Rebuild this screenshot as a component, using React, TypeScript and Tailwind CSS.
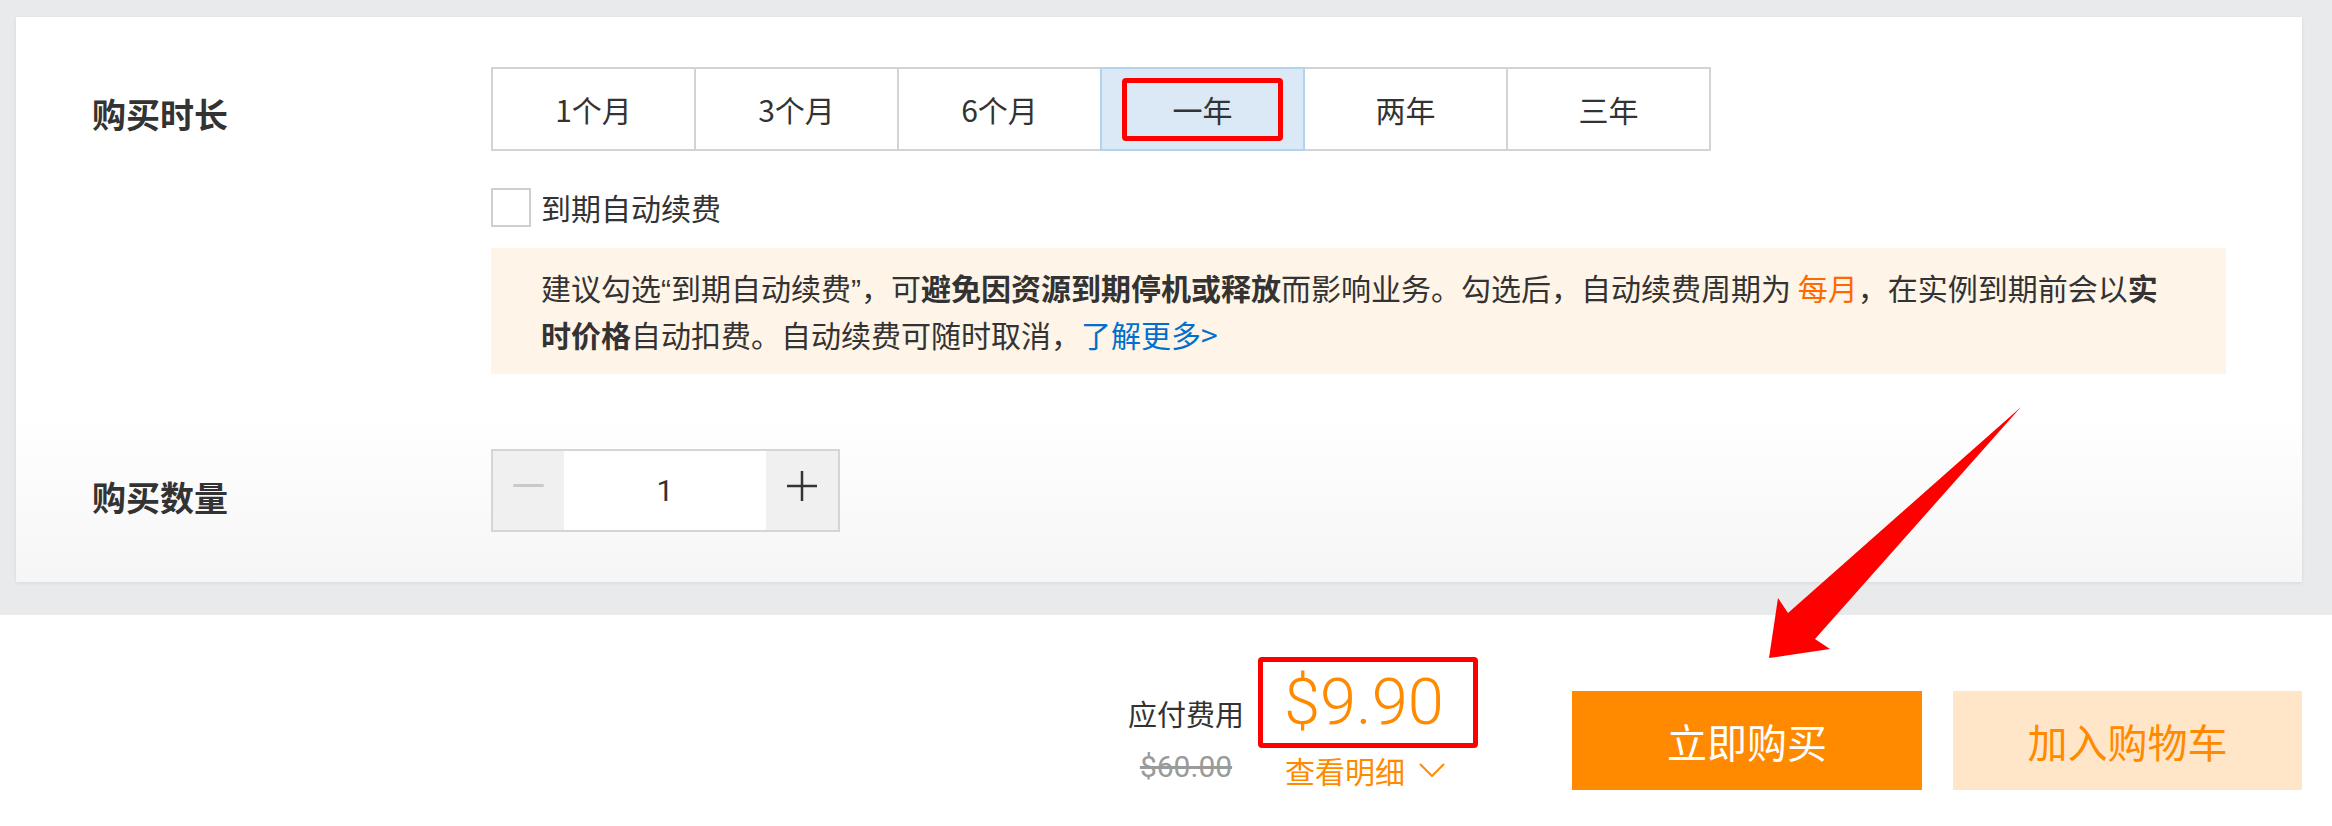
import React from "react"

const durations = ["1个月", "3个月", "6个月", "一年", "两年", "三年"]

function Tab({ label, active }: { label: string; active: boolean }) {
  if (active) {
    return (
      <div className="relative z-10 -ml-[2px] flex h-[84px] w-[205px] items-center justify-center border-2 border-[#b3d2ec] bg-[#dbe9f6]">
        {/* annotation box round the chosen duration */}
        <div className="flex h-[63px] w-[161px] items-center justify-center rounded-[4px] border-[5px] border-[#ff0000] text-[30px] text-[#333]">
          {label}
        </div>
      </div>
    )
  }
  return (
    <div className="-ml-[2px] flex h-[84px] w-[205px] items-center justify-center border-2 border-[#d3d3d3] bg-white text-[30px] text-[#333] first:ml-0">
      {label}
    </div>
  )
}

export default function App() {
  return (
    <div className="relative h-[826px] w-[2332px] overflow-hidden bg-white font-['Noto_Sans_CJK_SC',sans-serif]">
      <div className="bg-[#e9eaec] pb-[33px] pl-[16px] pr-[30px] pt-[17px]">
        <div className="flex h-[565px] flex-col bg-linear-to-b from-white from-70% to-[#f6f6f7] pl-[76px] pt-[50px] shadow-[0_1px_4px_rgba(0,0,0,0.08)]">
          {/* 购买时长 */}
          <div className="flex">
            <div className="flex h-[84px] w-[399px] items-center pt-[8px] text-[34px] font-bold text-[#333]">购买时长</div>
            <div className="flex flex-col">
              <div className="flex">
                {durations.map(d => (
                  <Tab key={d} label={d} active={d === "一年"} />
                ))}
              </div>
              <div className="mt-[37px] flex items-center">
                <span className="h-[39px] w-[40px] border-2 border-[#cfcfcf] bg-white" />
                <span className="ml-[10px] text-[30px] leading-[39px] text-[#333]">到期自动续费</span>
              </div>
              <div className="mt-[21px] w-[1735px] bg-[#fef4e7] px-[50px] py-[17px] text-[30px] leading-[45px] text-[#333]">
                <p className="whitespace-nowrap">
                  建议勾选<span className="font-['Liberation_Sans']">“</span>到期自动续费<span className="font-['Liberation_Sans']">”</span>，可<b>避免因资源到期停机或释放</b>而影响业务。勾选后，自动续费周期为 <span className="text-[#ff6a00]">每月</span>，在实例到期前会以<b>实</b>
                </p>
                <p className="whitespace-nowrap">
                  <b>时价格</b>自动扣费。自动续费可随时取消，<a className="text-[#0070cc]">了解更多&gt;</a>
                </p>
              </div>
            </div>
          </div>

          {/* 购买数量 */}
          <div className="mt-[75px] flex">
            <div className="flex h-[83px] w-[399px] items-center pt-[12px] text-[34px] font-bold text-[#333]">购买数量</div>
            <div className="flex h-[83px] w-[349px] border-2 border-[#d5d5d5]">
              <div className="flex w-[71px] items-center justify-center bg-[#f0f0f0] pb-[10px]">
                <span className="h-[3px] w-[31px] rounded-full bg-[#c9c9c9]" />
              </div>
              <div className="flex flex-1 items-center justify-center bg-white font-['Roboto'] text-[30px] text-[#333]">1</div>
              <div className="flex w-[72px] items-center justify-center bg-[#f0f0f0] pb-[10px]">
                <svg width="32" height="32" viewBox="0 0 32 32">
                  <path d="M16 1v30M1 16h30" stroke="#333" strokeWidth="2.5" />
                </svg>
              </div>
            </div>
          </div>
        </div>
      </div>

      {/* 底部结算栏 */}
      <div className="flex h-[211px] justify-end bg-white pr-[30px] pt-[42px]">
        <div className="flex gap-[14px]">
          <div className="flex w-[116px] flex-col items-center">
            <span className="mt-[38px] whitespace-nowrap text-[29px] leading-[36px] text-[#333]">应付费用</span>
            <span className="mt-[18px] font-['Roboto'] text-[30px] leading-[36px] text-[#9a9a9a] line-through">$60.00</span>
          </div>
          <div className="flex flex-col">
            <div className="flex h-[91px] w-[220px] items-center rounded-[4px] border-[5px] border-[#ff0000] pl-[21px]">
              <span className="font-['Roboto'] text-[65px] font-light leading-none text-[#ff8a00]">$9.90</span>
            </div>
            <div className="ml-[27px] mt-[4px] flex items-center gap-[14px] text-[30px] leading-[36px] text-[#ff8a00]">
              查看明细
              <svg width="26" height="14" viewBox="0 0 26 14">
                <path d="M1 1l12 12L25 1" fill="none" stroke="#ff8a00" strokeWidth="2" />
              </svg>
            </div>
          </div>
        </div>
        <button className="ml-[94px] mt-[34px] h-[99px] w-[350px] bg-[#ff8a00] text-[40px] text-white">立即购买</button>
        <button className="ml-[31px] mt-[34px] h-[99px] w-[349px] bg-[#ffe6c9] text-[40px] text-[#ff8a00]">加入购物车</button>
      </div>

      {/* 红色标注箭头 */}
      <svg className="pointer-events-none absolute left-0 top-0" width="2332" height="826">
        <polygon points="2021,407 1815,639 1830,649 1769,658 1778,598 1788,613" fill="#ff0000" />
      </svg>
    </div>
  )
}
